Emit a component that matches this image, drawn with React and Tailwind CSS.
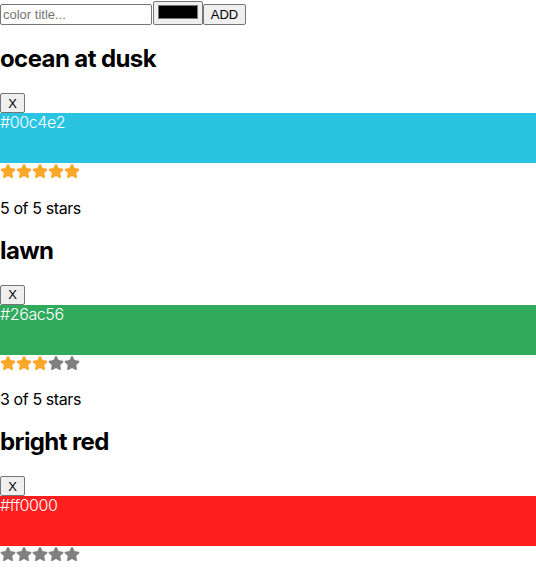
import React, { useState } from 'react';
import { FaStar } from 'react-icons/fa';

const initialColors = [
  { id: 1, title: 'ocean at dusk', color: '#00c4e2', shown: '#29c4e2', rating: 5 },
  { id: 2, title: 'lawn', color: '#26ac56', shown: '#30ab5c', rating: 3 },
  { id: 3, title: 'bright red', color: '#ff0000', shown: '#ff1e1e', rating: 0 },
];

const StarRating = ({ selected = 0, total = 5 }) => (
  <div className="flex h-[19.5px] items-start">
    {[...Array(total)].map((_, i) => (
      <FaStar
        key={i}
        size={16}
        className={i < selected ? 'text-[#fba529]' : 'text-[#808080]'}
      />
    ))}
  </div>
);

const ColorCard = ({ item, onRemove }) => (
  <section>
    <h1 className="font-['Inter',sans-serif] text-2xl font-bold tracking-[-0.6px] leading-[28px] my-5 text-black">{item.title}</h1>
    <button
      onClick={onRemove}
      className="block h-5 w-[25px] text-[13px] leading-none bg-[#efefef] border border-[#767676] rounded-[2px] text-black"
    >
      X
    </button>
    <div
      className="h-[50px] w-full font-['Inter',sans-serif] font-light tracking-[-0.4px] text-white text-base leading-[18px]"
      style={{ backgroundColor: item.shown }}
    >
      {item.color}
    </div>
    <StarRating selected={item.rating} />
    <p className="my-4 font-['Inter',sans-serif] tracking-[-0.4px] text-base leading-[18px] text-black">{item.rating} of 5 stars</p>
  </section>
);

export default function App() {
  const [colors, setColors] = useState(initialColors);

  return (
    <div className="font-['Liberation_Sans',Arial,sans-serif] bg-white min-h-screen w-[536px] overflow-hidden">
      {/* add color form */}
      <form className="flex items-end h-[25px]" onSubmit={(e) => e.preventDefault()}>
        <input
          type="text"
          placeholder="color title..."
          className="h-[21px] w-[152px] px-[2px] text-[13px] border border-[#767676] rounded-[2px] placeholder:text-[#757575] outline-none"
        />
        <div className="h-[24px] w-[50px] ml-[1px] bg-[#efefef] border border-[#767676] rounded-[2px] flex items-start justify-center pt-[3px]">
          <div className="h-[14px] w-[40px] bg-black border border-[#777]" />
        </div>
        <button type="submit" className="h-[21px] w-[43px] text-[13px] bg-[#efefef] border border-[#767676] rounded-[2px] text-black">
          ADD
        </button>
      </form>

      {colors.map((item) => (
        <ColorCard
          key={item.id}
          item={item}
          onRemove={() => setColors(colors.filter((c) => c.id !== item.id))}
        />
      ))}
    </div>
  );
}
